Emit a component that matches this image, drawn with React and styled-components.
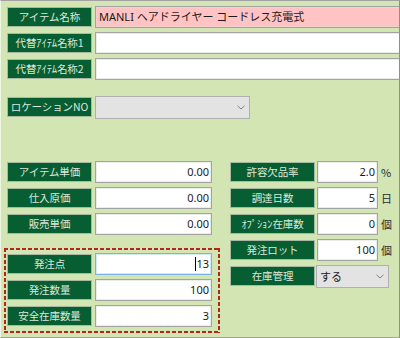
import React from "react";
import styled, { createGlobalStyle } from "styled-components";

const Global = createGlobalStyle`
  html, body { margin: 0; padding: 0; background: #d2e5b3; }
  * { box-sizing: border-box; }
`;

const Frame = styled.div`
  width: 400px;
  height: 338px;
  overflow: hidden;
  background: #d2e5b3;
  border-top: 1px solid #a3a3a3;
  border-right: 1px solid #8f8f8f;
  border-bottom: 1px solid #a3a3a3;
  border-left: 1px solid #eef5e4;
  padding: 5px 0 0 6px;
  display: flex;
  flex-direction: column;
  font-family: "Noto Sans", "Noto Sans CJK JP", sans-serif;
`;

const Stack = styled.div`
  display: flex;
  flex-direction: column;
  gap: 4px;
  margin-top: ${(p) => p.$top || 0}px;
`;

const Row = styled.div`
  display: flex;
  align-items: center;
  height: 22px;
  margin-top: ${(p) => p.$top || 0}px;
`;

const Label = styled.div`
  flex-shrink: 0;
  width: 85px;
  height: 20px;
  background: #075e33;
  border: 1px solid #a5baa0;
  color: #dce8dc;
  font-family: "Noto Sans CJK JP", sans-serif;
  font-size: 10.5px;
  line-height: 18px;
  text-align: center;
  white-space: nowrap;
  letter-spacing: -0.1px;
`;

const Field = styled.div`
  flex-shrink: 0;
  width: ${(p) => p.$w}px;
  height: 22px;
  margin-left: ${(p) => (p.$gap == null ? 3 : p.$gap)}px;
  background: ${(p) => (p.$pink ? "#ffc3c3" : "#ffffff")};
  border: 1px solid ${(p) => (p.$focus ? "#7db3e3" : "#a3a3a3")};
  box-shadow: inset 0 0 0 1px ${(p) => (p.$focus ? "#d5e8f7" : p.$pink ? "#f2d0d0" : "#ececec")};
  font-size: 11px;
  line-height: 20px;
  color: #1a1a1a;
  white-space: nowrap;
  padding: ${(p) => (p.$right ? "0 2px 0 3px" : "0 3px")};
  text-align: ${(p) => (p.$right ? "right" : "left")};
  overflow: hidden;
`;

const Caret = styled.span`
  display: inline-block;
  width: 1px;
  height: 14px;
  background: #000;
  vertical-align: -3px;
  margin-right: 0px;
`;

const Select = styled.div`
  flex-shrink: 0;
  width: ${(p) => p.$w}px;
  height: 23px;
  margin-left: ${(p) => (p.$gap == null ? 3 : p.$gap)}px;
  background: #e3e3e3;
  border: 1px solid #b0b0b0;
  display: flex;
  align-items: center;
  justify-content: space-between;
  padding: 0 4px 0 3px;
  font-size: 11px;
  color: #1a1a1a;
`;

const Unit = styled.span`
  margin-left: 3px;
  font-size: 11px;
  color: #2a2a2a;
  font-family: "Noto Sans CJK JP", sans-serif;
`;

const Bottom = styled.div`
  display: flex;
  gap: 18px;
  margin-top: 43px;
`;

const LeftCol = styled.div`
  width: 205px;
  display: flex;
  flex-direction: column;
  gap: 4px;
`;

const RightCol = styled.div`
  display: flex;
  flex-direction: column;
  gap: 4px;
`;

const dashH = "repeating-linear-gradient(90deg, #b3261e 0 4px, transparent 4px 6px)";
const dashV = "repeating-linear-gradient(180deg, #b3261e 0 4px, transparent 4px 6px)";

const Group = styled.div`
  margin: 9px -8px 0 -3px;
  padding: 5px 8px 6px 3px;
  display: flex;
  flex-direction: column;
  gap: 4px;
  background:
    ${dashH} left top / 100% 2px no-repeat,
    ${dashH} left bottom / 100% 2px no-repeat,
    ${dashV} left top / 2px 100% no-repeat,
    ${dashV} right top / 2px 100% no-repeat;
`;

const Chevron = () => (
  <svg width="8" height="5" viewBox="0 0 8 5">
    <path d="M0.5 0.8 L4 4 L7.5 0.8" fill="none" stroke="#808080" strokeWidth="1" />
  </svg>
);

const NumRow = ({ label, value, focus }) => (
  <Row>
    <Label>{label}</Label>
    <Field $w={117} $gap={3} $right $focus={focus}>
      {focus && <Caret />}
      {value}
    </Field>
  </Row>
);

const RightRow = ({ label, value, unit }) => (
  <Row>
    <Label>{label}</Label>
    <Field $w={61} $gap={2} $right>
      {value}
    </Field>
    {unit && <Unit>{unit}</Unit>}
  </Row>
);

export default function App() {
  return (
    <>
      <Global />
      <Frame>
        <Stack>
          <Row>
            <Label>アイテム名称</Label>
            <Field $w={320} $pink>
              MANLI ヘアドライヤー コードレス充電式
            </Field>
          </Row>
          <Row>
            <Label>代替ｱｲﾃﾑ名称1</Label>
            <Field $w={320} />
          </Row>
          <Row>
            <Label>代替ｱｲﾃﾑ名称2</Label>
            <Field $w={320} />
          </Row>
        </Stack>

        <Row $top={16}>
          <Label>ロケーションNO</Label>
          <Select $w={155}>
            <span />
            <Chevron />
          </Select>
        </Row>

        <Bottom>
          <LeftCol>
            <NumRow label="アイテム単価" value="0.00" />
            <NumRow label="仕入原価" value="0.00" />
            <NumRow label="販売単価" value="0.00" />
            <Group>
              <NumRow label="発注点" value="13" focus />
              <NumRow label="発注数量" value="100" />
              <NumRow label="安全在庫数量" value="3" />
            </Group>
          </LeftCol>
          <RightCol>
            <RightRow label="許容欠品率" value="2.0" unit="%" />
            <RightRow label="調達日数" value="5" unit="日" />
            <RightRow label="ｵﾌﾟｼｮﾝ在庫数" value="0" unit="個" />
            <RightRow label="発注ロット" value="100" unit="個" />
            <Row>
              <Label>在庫管理</Label>
              <Select $w={73} $gap={1}>
                <span>する</span>
                <Chevron />
              </Select>
            </Row>
          </RightCol>
        </Bottom>
      </Frame>
    </>
  );
}
